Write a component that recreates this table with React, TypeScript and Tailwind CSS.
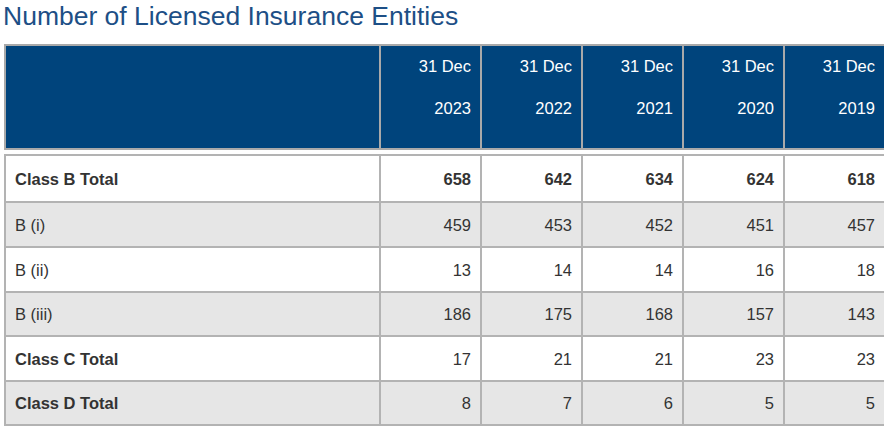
import React from "react";

type Row = { label: string; values: number[]; boldLabel: boolean; boldValues: boolean; gray: boolean; h: string };

const rows: Row[] = [
  { label: "Class B Total", values: [658, 642, 634, 624, 618], boldLabel: true, boldValues: true, gray: false, h: "h-[45px]" },
  { label: "B (i)", values: [459, 453, 452, 451, 457], boldLabel: false, boldValues: false, gray: true, h: "h-[43px]" },
  { label: "B (ii)", values: [13, 14, 14, 16, 18], boldLabel: false, boldValues: false, gray: false, h: "h-[43px]" },
  { label: "B (iii)", values: [186, 175, 168, 157, 143], boldLabel: false, boldValues: false, gray: true, h: "h-[42px]" },
  { label: "Class C Total", values: [17, 21, 21, 23, 23], boldLabel: true, boldValues: false, gray: false, h: "h-[43px]" },
  { label: "Class D Total", values: [8, 7, 6, 5, 5], boldLabel: true, boldValues: false, gray: true, h: "h-[42px]" },
];

const years = ["2023", "2022", "2021", "2020", "2019"];

export default function App() {
  return (
    <div
      className="w-[895px] h-[434px] bg-white pl-[4px] overflow-hidden"
      style={{ fontFamily: '"Liberation Sans", Arial, sans-serif' }}
    >
      <h1 className="mt-[1px] -ml-[1px] text-[26.5px] leading-[30px] text-[#1d4f86] font-normal">
        Number of Licensed Insurance Entities
      </h1>

      <div className="mt-[13px] w-[880px] grid grid-cols-[373px_repeat(5,99px)] gap-[2px] p-[2px] bg-[#a9a9a9]">
        <div className="h-[102px] bg-[#00447c]" />
        {years.map((y) => (
          <div
            key={y}
            className="h-[102px] bg-[#00447c] flex flex-col items-end pt-[10px] gap-[22px] pr-[9px] text-white text-[16.5px] leading-[20px]"
          >
            <span>31 Dec</span>
            <span>{y}</span>
          </div>
        ))}
      </div>

      <div className="mt-[4px] w-[880px] grid grid-cols-[373px_repeat(5,99px)] gap-[2px] p-[2px] bg-[#b3b3b3]">
        {rows.map((r) => {
          const bg = r.gray ? "bg-[#e6e6e6]" : "bg-white";
          return (
            <React.Fragment key={r.label}>
              <div
                className={`${r.h} ${bg} flex items-center pl-[9px] text-[16.5px] leading-[20px] text-[#333333] ${
                  r.boldLabel ? "font-bold" : "font-normal"
                }`}
              >
                {r.label}
              </div>
              {r.values.map((v, j) => (
                <div
                  key={j}
                  className={`${r.h} ${bg} flex items-center justify-end pr-[9px] text-[16.5px] leading-[20px] text-[#333333] ${
                    r.boldValues ? "font-bold" : "font-normal"
                  }`}
                >
                  {v}
                </div>
              ))}
            </React.Fragment>
          );
        })}
      </div>
    </div>
  );
}
